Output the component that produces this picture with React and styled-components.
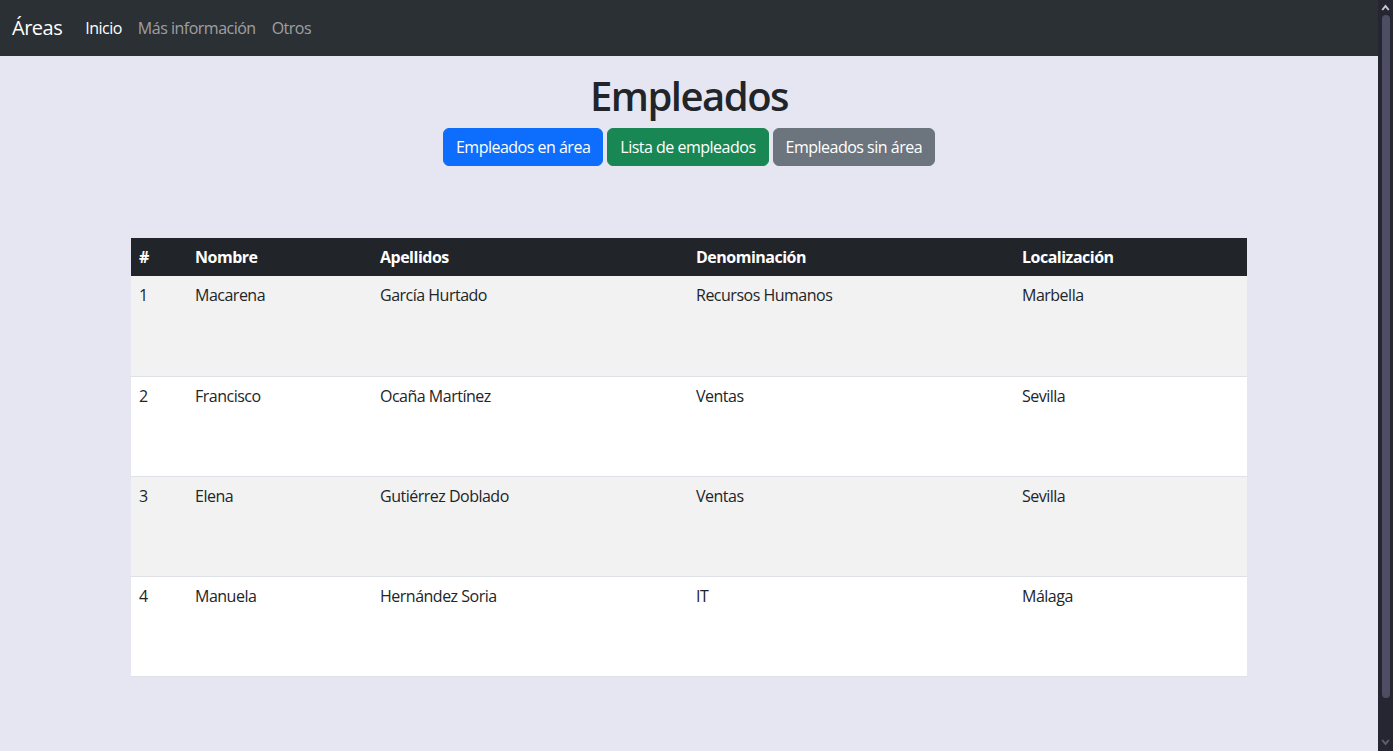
import React from 'react';
import styled, { createGlobalStyle } from 'styled-components';

const GlobalStyle = createGlobalStyle`
  body {
    margin: 0;
    background: #e6e5f2;
    color: #212529;
    font-family: "Open Sans", "Noto Sans", sans-serif;
    font-size: 16px;
    line-height: 1.5;
    letter-spacing: -0.5px;
    overflow: hidden;
  }
  * {
    box-sizing: border-box;
  }
`;

const Shell = styled.div`
  display: flex;
  height: 100vh;
`;

const Viewport = styled.div`
  flex: 1;
  min-width: 0;
  overflow: hidden;
`;

// painted scrollbar, the headless browser hides the real one
const Rail = styled.div`
  width: 15px;
  flex-shrink: 0;
  background: #252631;
  display: flex;
  flex-direction: column;
  align-items: center;
  padding: 3px 0 4px;
`;

const Arrow = styled.svg`
  width: 9px;
  height: 9px;
  flex-shrink: 0;
  fill: ${(p) => (p.$dim ? '#5e5f73' : '#c9c9d3')};
`;

const Thumb = styled.div`
  width: 8px;
  margin: 3px 0 0;
  height: 683px;
  border-radius: 4px;
  background: #4d4e64;
`;

const RailSpace = styled.div`
  flex: 1;
`;

const Navbar = styled.nav`
  height: 56px;
  background: #2b3035;
  display: flex;
  align-items: center;
  padding: 0 12px;
`;

const Brand = styled.a`
  color: #fff;
  font-size: 20px;
  margin-right: 15px;
  text-decoration: none;
`;

const NavList = styled.ul`
  display: flex;
  list-style: none;
  margin: 0;
  padding: 0;
`;

const NavLink = styled.a`
  display: block;
  padding: 8px;
  color: ${(p) => (p.$active ? '#fff' : 'rgba(255, 255, 255, 0.55)')};
  text-decoration: none;
`;

const Container = styled.main`
  width: 1140px;
  margin: 0 auto;
  padding: 16px 12px 118px;
`;

const Heading = styled.h1`
  margin: 0 0 8px;
  font-size: 40px;
  font-weight: 600;
  line-height: 48px;
  letter-spacing: -1.5px;
  text-align: center;
`;

const ButtonRow = styled.div`
  display: flex;
  justify-content: center;
  gap: 4px;
  margin-bottom: 72px;
`;

const Button = styled.button`
  height: 38px;
  padding: 6px 12px;
  border: 1px solid ${(p) => p.$color};
  border-radius: 6px;
  background: ${(p) => p.$color};
  color: #fff;
  font: inherit;
  letter-spacing: inherit;
  line-height: 24px;
  cursor: pointer;
`;

const Table = styled.table`
  width: 100%;
  border-collapse: collapse;
  table-layout: fixed;
`;

const HeadCell = styled.th`
  width: ${(p) => p.$w}px;
  height: 38px;
  padding: 7px 8px;
  background: #212529;
  color: #fff;
  font-weight: 700;
  text-align: left;
  line-height: 24px;
`;

const Row = styled.tr`
  background: ${(p) => (p.$striped ? '#f2f2f2' : '#fff')};
`;

const Cell = styled.td`
  height: 100px;
  padding: 7px 8px 8px;
  vertical-align: top;
  line-height: 24px;
  border-bottom: 1px solid #dee2e6;
`;

const columns = [
  { label: '#', w: 56 },
  { label: 'Nombre', w: 185 },
  { label: 'Apellidos', w: 316 },
  { label: 'Denominación', w: 326 },
  { label: 'Localización', w: 233 },
];

const empleados = [
  { id: 1, nombre: 'Macarena', apellidos: 'García Hurtado', area: 'Recursos Humanos', loc: 'Marbella' },
  { id: 2, nombre: 'Francisco', apellidos: 'Ocaña Martínez', area: 'Ventas', loc: 'Sevilla' },
  { id: 3, nombre: 'Elena', apellidos: 'Gutiérrez Doblado', area: 'Ventas', loc: 'Sevilla' },
  { id: 4, nombre: 'Manuela', apellidos: 'Hernández Soria', area: 'IT', loc: 'Málaga' },
];

const App = () => {
  return (
    <Shell>
      <GlobalStyle />
      <Viewport>
        <Navbar>
          <Brand href="#">Áreas</Brand>
          <NavList>
            <li><NavLink href="#" $active>Inicio</NavLink></li>
            <li><NavLink href="#">Más información</NavLink></li>
            <li><NavLink href="#">Otros</NavLink></li>
          </NavList>
        </Navbar>
        <Container>
          <Heading>Empleados</Heading>
          <ButtonRow>
            <Button $color="#0d6efd">Empleados en área</Button>
            <Button $color="#198754">Lista de empleados</Button>
            <Button $color="#6c757d">Empleados sin área</Button>
          </ButtonRow>
          <Table>
            <thead>
              <tr>
                {columns.map((c) => (
                  <HeadCell key={c.label} $w={c.w}>{c.label}</HeadCell>
                ))}
              </tr>
            </thead>
            <tbody>
              {empleados.map((e, i) => (
                <Row key={e.id} $striped={i % 2 === 0}>
                  <Cell>{e.id}</Cell>
                  <Cell>{e.nombre}</Cell>
                  <Cell>{e.apellidos}</Cell>
                  <Cell>{e.area}</Cell>
                  <Cell>{e.loc}</Cell>
                </Row>
              ))}
            </tbody>
          </Table>
        </Container>
      </Viewport>
      <Rail>
        <Arrow viewBox="0 0 9 9">
          <path d="M4.5 1.5 L8.5 6.5 L7 7.5 L4.5 4.5 L2 7.5 L0.5 6.5 Z" />
        </Arrow>
        <Thumb />
        <RailSpace />
        <Arrow viewBox="0 0 9 9" $dim>
          <path d="M4.5 7.5 L8.5 2.5 L7 1.5 L4.5 4.5 L2 1.5 L0.5 2.5 Z" />
        </Arrow>
      </Rail>
    </Shell>
  );
};

export default App;
